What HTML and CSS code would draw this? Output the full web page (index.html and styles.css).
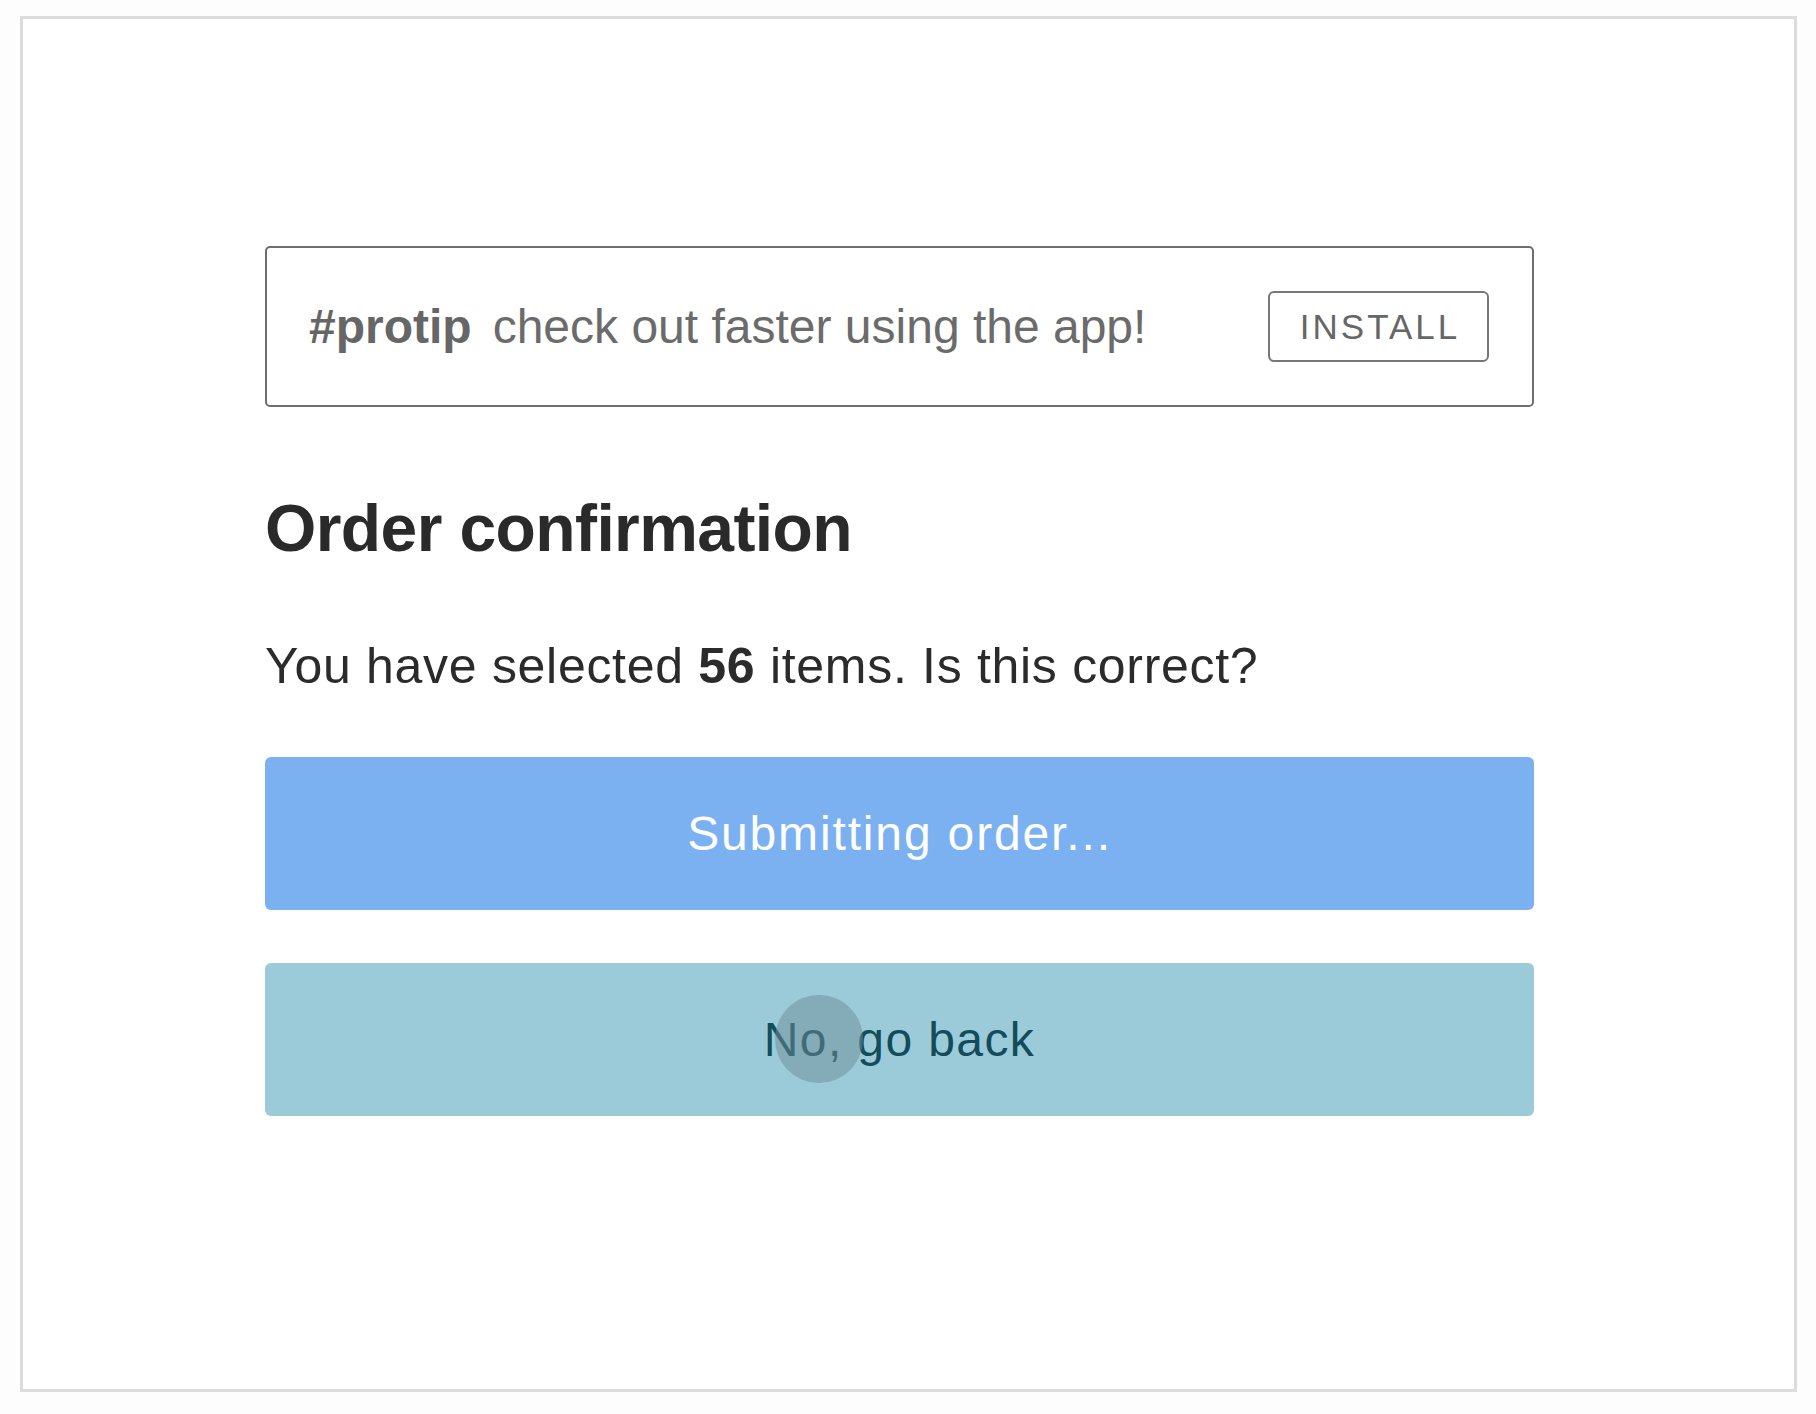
FILE: index.html
```html
<!DOCTYPE html>
<html lang="en">
<head>
  <meta charset="UTF-8" />
  <meta name="viewport" content="width=device-width, initial-scale=1" />
  <title>Order confirmation</title>
  <link rel="stylesheet" href="styles.css">
</head>
<body>
<div class="marco">
  <div class="contenido">
    <div class="aviso">
      <p class="aviso-texto"><strong class="etiqueta">#protip</strong>check out faster using the app!</p>
      <button class="instalar" type="button">INSTALL</button>
    </div>

    <h1>Order confirmation</h1>

    <p class="pregunta">You have selected <strong>56</strong> items. Is this correct?</p>

    <div class="botones">
      <button class="boton enviar" type="button" disabled>Submitting order...</button>
      <button class="boton volver" type="button">
        No, go back
        <span class="toque"></span>
      </button>
    </div>
  </div>
</div>
</body>
</html>
```

FILE: styles.css
```css
body {
  margin: 0;
  background: #fdfdfd;
  font-family: 'Liberation Sans', Arial, Helvetica, sans-serif;
  color: #2b2b2b;
}
.marco {
  margin: 16px 0 0 20px;
  width: 1771px;
  height: 1370px;
  border: 3px solid #dcdce0;
  background: white;
}
.contenido {
  width: 1269px;
  padding: 227px 0 0 242px;
}
.aviso {
  display: flex;
  align-items: center;
  justify-content: space-between;
  height: 157px;
  padding: 0 43px 0 42px;
  border: 2px solid #6e6e6e;
  border-radius: 5px;
}
.aviso-texto {
  margin: 0;
  font-size: 48px;
  color: #6b6b6b;
}
.etiqueta {
  color: #666;
  margin-right: 21px;
}
.instalar {
  width: 221px;
  height: 71px;
  background: white;
  border: 2px solid #777;
  border-radius: 6px;
  font-family: inherit;
  font-size: 35px;
  letter-spacing: 3px;
  color: #666;
  padding: 0 0 0 3px;
}
h1 {
  margin: 88px 0 0 0;
  font-size: 66px;
  line-height: 1;
  letter-spacing: -0.6px;
  font-weight: bold;
  color: #2a2a2a;
}
.pregunta {
  margin: 80px 0 0 0;
  font-size: 50px;
  line-height: 1;
  letter-spacing: 0.7px;
  color: #2b2b2b;
}
.botones {
  display: flex;
  flex-direction: column;
  gap: 53px;
  margin-top: 66px;
}
.boton {
  position: relative;
  height: 153px;
  width: 100%;
  border: none;
  border-radius: 6px;
  font-family: inherit;
  font-size: 48px;
  letter-spacing: 1.4px;
}
.enviar {
  background: #7bb1f1;
  color: white;
  letter-spacing: 1.85px;
}
.volver {
  background: #9bcbd8;
  color: #134c5b;
}
.toque {
  position: absolute;
  left: 510px;
  top: 32px;
  width: 88px;
  height: 88px;
  border-radius: 50%;
  background: rgba(110, 140, 152, 0.5);
}
```
